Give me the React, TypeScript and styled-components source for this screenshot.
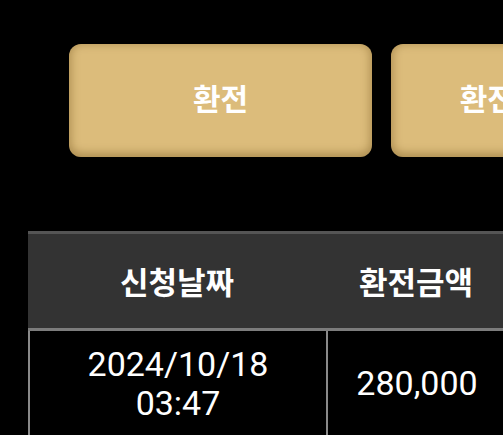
import styled, { createGlobalStyle } from 'styled-components';

const GlobalStyle = createGlobalStyle`
  html, body {
    margin: 0;
    padding: 0;
    background: #000;
    overflow: hidden;
  }
  body {
    font-family: Roboto, "Noto Sans CJK KR", sans-serif;
    color: #fff;
  }
`;

const Page = styled.div`
  width: 503px;
  height: 435px;
  overflow: hidden;
  background: #000;
  padding-top: 44px;
  box-sizing: border-box;
`;

const ButtonRow = styled.div`
  display: flex;
  gap: 19px;
  padding-left: 69px;
  width: max-content;
`;

const ExchangeButton = styled.button`
  width: 303px;
  height: 113px;
  flex-shrink: 0;
  border: none;
  border-radius: 12px;
  padding: 0 0 7px;
  background: #dcbc7b;
  box-shadow: inset 0 -2px 8px 2px rgba(90, 60, 10, 0.35);
  color: #fff;
  font-family: "Noto Sans CJK KR", sans-serif;
  font-weight: 700;
  font-size: 30px;
  white-space: nowrap;
  cursor: pointer;
`;

const Table = styled.div`
  margin: 74px 0 0 28px;
  display: grid;
  grid-template-columns: 298px 180px;
  width: max-content;
  border-top: 3px solid #555;
`;

const HeadCell = styled.div`
  height: 97px;
  background: #333;
  border-bottom: 3px solid #7c7c7c;
  display: flex;
  align-items: center;
  justify-content: center;
  font-family: "Noto Sans CJK KR", sans-serif;
  font-weight: 700;
  font-size: 31px;
  padding-bottom: 1px;
  box-sizing: border-box;
  color: #fff;
`;

const Cell = styled.div`
  min-height: 105px;
  border-left: 2px solid #8a8a8a;
  display: flex;
  align-items: center;
  justify-content: center;
  text-align: center;
  font-family: Roboto, sans-serif;
  font-size: 34px;
  line-height: 39px;
  box-sizing: border-box;
`;

const rows = [{ date: '2024/10/18', time: '03:47', amount: '280,000' }];

export default function App() {
  return (
    <Page>
      <GlobalStyle />
      <ButtonRow>
        <ExchangeButton>환전</ExchangeButton>
        <ExchangeButton>환전신청내역</ExchangeButton>
      </ButtonRow>
      <Table>
        <HeadCell>신청날짜</HeadCell>
        <HeadCell>환전금액</HeadCell>
        {rows.map((r) => (
          <>
            <Cell>
              {r.date}
              <br />
              {r.time}
            </Cell>
            <Cell>{r.amount}</Cell>
          </>
        ))}
      </Table>
    </Page>
  );
}
